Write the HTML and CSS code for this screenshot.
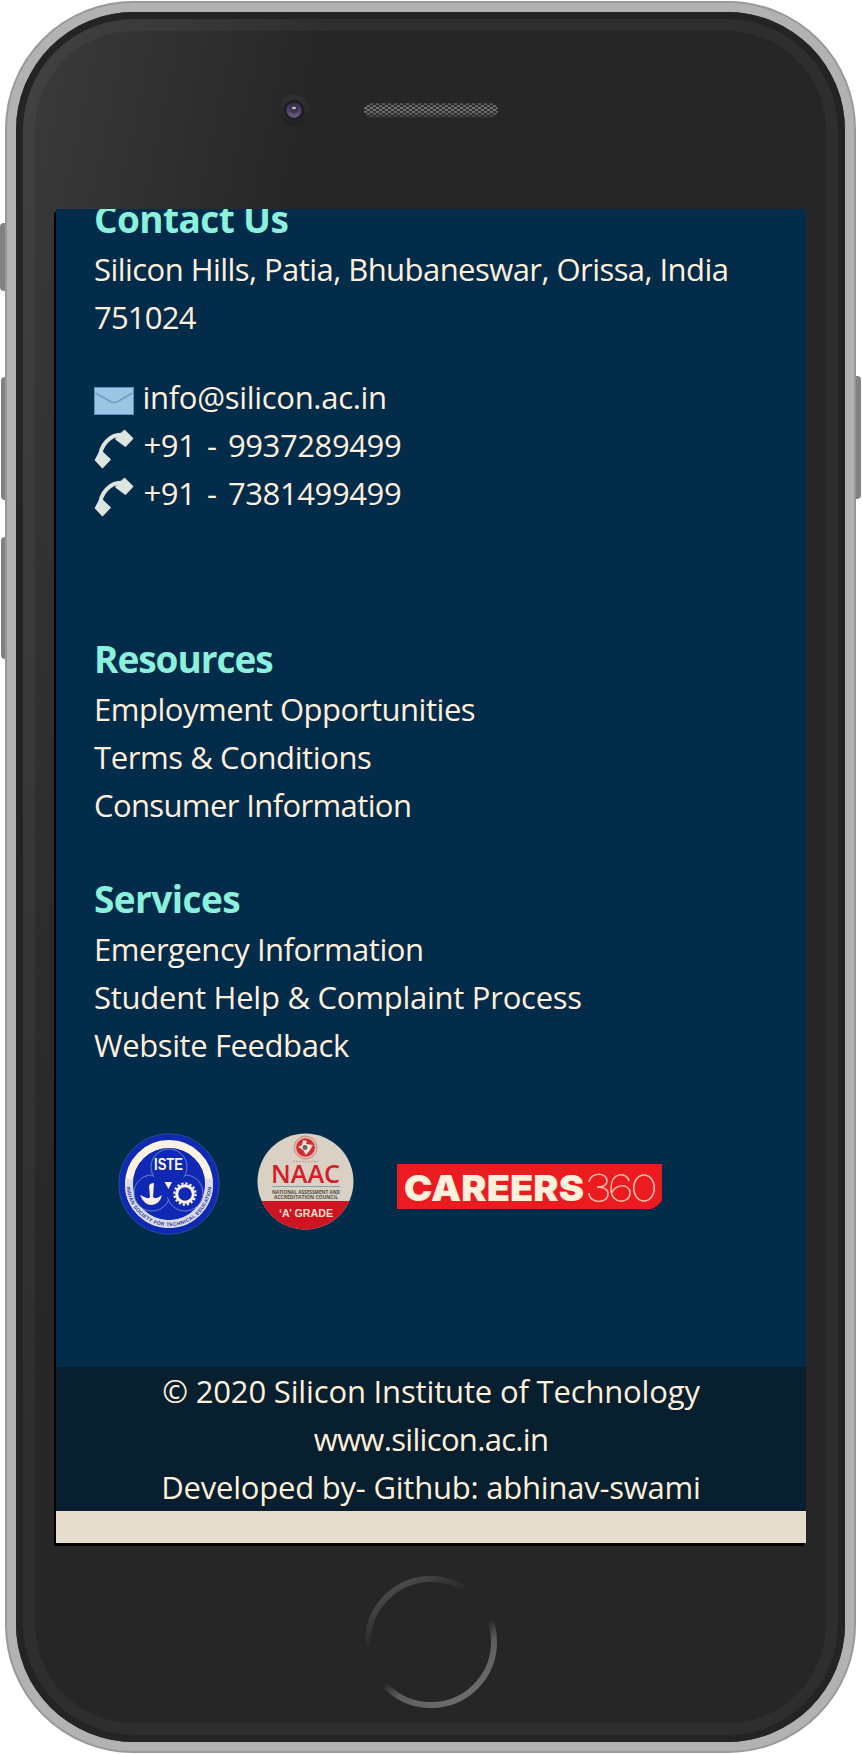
FILE: index.html
```html
<!DOCTYPE html>
<html lang="en">
<head>
<meta charset="utf-8">
<title>Silicon Institute of Technology</title>
<link rel="stylesheet" href="styles.css">
</head>
<body>
<div class="device">
  <i class="key key-mute"></i><i class="key key-up"></i><i class="key key-down"></i><i class="key key-power"></i>
  <div class="shell"><div class="bezel"><div class="ring"></div>
    <div class="top">
      <svg class="camera" width="32" height="32" viewBox="0 0 32 32">
        <defs>
          <linearGradient id="rim" x1="0" y1="0" x2="0" y2="1"><stop offset="0" stop-color="#323232"/><stop offset="1" stop-color="#212121"/></linearGradient>
          <linearGradient id="lens" x1="0" y1="0" x2="0" y2="1"><stop offset="0" stop-color="#35264a"/><stop offset="1" stop-color="#6d5c86"/></linearGradient>
        </defs>
        <circle cx="16" cy="16" r="15.3" fill="url(#rim)"/><circle cx="16" cy="16" r="10" fill="#1c1b20"/>
        <circle cx="16" cy="16" r="7.7" fill="url(#lens)"/><circle cx="16" cy="15.5" r="3.8" fill="#3b3547"/>
        <ellipse cx="16" cy="14" rx="2.2" ry="1.3" fill="#bdb8c4"/>
      </svg>
      <svg class="speaker" width="134" height="15" viewBox="0 0 134 15">
        <defs>
          <pattern id="mesh" width="6" height="4" patternUnits="userSpaceOnUse"><rect width="6" height="4" fill="#303030"/><rect width="3" height="2" fill="#777"/><rect x="3" y="2" width="3" height="2" fill="#777"/></pattern>
          <linearGradient id="shade" x1="0" y1="0" x2="0" y2="1"><stop offset="0" stop-color="#262626" stop-opacity=".55"/><stop offset=".3" stop-color="#262626" stop-opacity="0"/><stop offset=".6" stop-color="#262626" stop-opacity=".1"/><stop offset="1" stop-color="#262626" stop-opacity=".85"/></linearGradient>
        </defs>
        <rect width="134" height="15" rx="7.5" fill="url(#mesh)"/><rect width="134" height="15" rx="7.5" fill="url(#shade)"/>
      </svg>
    </div>
    <main class="screen">
      <section class="contact">
        <h2 class="t-contact">Contact Us</h2>
        <p class="t-address">Silicon Hills, Patia, Bhubaneswar, Orissa, India</p>
        <p class="t-pin">751024</p>
        <div class="reach">
          <p class="line"><svg class="ico" width="40" height="48" viewBox="0 0 40 48"><rect x=".5" y="14.5" width="39" height="27" fill="#9bc5e2" stroke="#5c92bd"/><path d="M1.5 20 L16.5 28.6 Q20 30.4 23.5 28.6 L38.5 20" fill="none" stroke="#689dc6" stroke-width="1.5"/></svg><span class="t-mail">info@silicon.ac.in</span></p>
          <p class="line"><svg class="ico" width="40" height="48" viewBox="0 0 40 48"><use href="#handset"/></svg><span class="t-phone">+91 - 9937289499</span></p>
          <p class="line"><svg class="ico" width="40" height="48" viewBox="0 0 40 48"><g id="handset"><path d="M7 36 C5 26 16 12.500 29 14" fill="none" stroke="#dfe5e0" stroke-width="4"/><path d="M30.500 9.500 L38.500 17.500 L31.500 25 L22 18 Z M6.500 29.500 L16 38.500 L8.500 46.500 L1.500 39 Z" fill="#dfe5e0" stroke="#dfe5e0" stroke-width="1.600" stroke-linejoin="round"/></g></svg><span class="t-phone">+91 - 7381499499</span></p>
        </div>
      </section>
      <section class="resources">
        <h2 class="t-resources">Resources</h2>
        <p class="t-employment">Employment Opportunities</p>
        <p class="t-terms">Terms &amp; Conditions</p>
        <p class="t-consumer">Consumer Information</p>
      </section>
      <section class="services">
        <h2 class="t-services">Services</h2>
        <p class="t-emergency">Emergency Information</p>
        <p class="t-student">Student Help &amp; Complaint Process</p>
        <p class="t-feedback">Website Feedback</p>
      </section>
      <div class="badges">
        <svg class="iste" width="102" height="102" viewBox="0 0 102 102">
          <defs><path id="arc" d="M9.200 43 A42.500 42.500 0 1 0 92.800 43"/></defs>
          <circle cx="51" cy="51" r="50.300" fill="#1029b4" stroke="#25508d"/>
          <circle cx="51" cy="51" r="40" fill="none" stroke="#fcf2e4" stroke-width="8"/>
          <path d="M11.300 46 A40 40 0 1 0 90.700 46" fill="none" stroke="#dcdce8" stroke-width="8"/>
          <circle cx="51" cy="51" r="36" fill="#1029b4"/>
          <g fill="#1029b4" stroke="#6f7fcd" stroke-width="1"><circle cx="34" cy="60" r="18"/><circle cx="67" cy="60" r="18"/><circle cx="51" cy="34" r="18"/></g>
          <path d="M36 42 L66 42 L63 57 L51 65 L38 57Z" fill="#1029b4"/>
          <text x="36" y="37" class="iste-name" textLength="29" lengthAdjust="spacingAndGlyphs">ISTE</text>
          <path d="M46.500 49 H54 L50.500 56Z M22 62 Q31 67 32 64 L31 53 Q32 50 36 50 L35 64 Q38 67 44 62 Q42 71 34 72 Q26 72 22 62Z" fill="#fcf2e4"/>
          <circle cx="67" cy="61" r="8.300" fill="none" stroke="#fcf2e4" stroke-width="3"/><circle cx="67" cy="61" r="10.600" fill="none" stroke="#fcf2e4" stroke-width="2.200" stroke-dasharray="2.200 1.970"/>
          <text class="iste-ring"><textPath href="#arc" startOffset="50%">INDIAN SOCIETY FOR TECHNICAL EDUCATION</textPath></text>
        </svg>
        <svg class="naac" width="97" height="97" viewBox="0 0 97 97">
          <defs><clipPath id="disc"><circle cx="48.500" cy="48.500" r="48"/></clipPath></defs>
          <g clip-path="url(#disc)"><rect width="97" height="97" fill="#d9d2c4"/><rect y="68" width="97" height="29" fill="#cf1421"/></g>
          <circle cx="48.500" cy="14.500" r="11.500" fill="#dcb9b0" stroke="#d57873" stroke-width=".8"/><circle cx="48.500" cy="14.500" r="9.300" fill="#d42b32"/>
          <path d="M46 7 L50 8 L49 11 L56 12 L53 17 L49 22 L46 17 L41 14 L45 12Z" fill="#f1e3d8"/><circle cx="48" cy="14.500" r="2.500" fill="#676965"/>
          <path d="M36 28.500 H61" stroke="#cf9f98" stroke-width="1.500" stroke-dasharray="2 1"/>
          <text x="14" y="50" class="naac-name" textLength="69" lengthAdjust="spacingAndGlyphs">NAAC</text>
          <path d="M15 53.500 H83" stroke="#7da3b8"/>
          <text x="15" y="60.500" class="naac-sub" textLength="68" lengthAdjust="spacingAndGlyphs">NATIONAL ASSESSMENT AND</text>
          <text x="17" y="66.300" class="naac-sub" textLength="64" lengthAdjust="spacingAndGlyphs">ACCREDITATION COUNCIL</text>
          <text x="22" y="83.500" class="naac-grade" textLength="54" lengthAdjust="spacingAndGlyphs">‘A’ GRADE</text>
        </svg>
        <svg class="careers" width="265" height="45" viewBox="0 0 265 45">
          <path d="M0 0 H265 V36 Q262 42 254 45 H0Z" fill="#ec1b20"/>
          <text x="7" y="36.500" class="careers-name" textLength="180" lengthAdjust="spacingAndGlyphs">CAREERS</text>
          <g fill="none" stroke="#ffc1ac" stroke-width="1.500"><path d="M192 18 C193 8 210 8 210 17 C210 22 206 23 200 23 C207 23 211 25 211 30 C211 40 192 40 192 29"/><path d="M232 17 C230 8 214 7 214 25 C214 41 233 40 233 29 C233 19 217 20 215 29"/><ellipse cx="247" cy="24" rx="10.300" ry="13"/></g>
        </svg>
      </div>
      <footer class="foot">
        <p class="t-copy">© 2020 Silicon Institute of Technology</p>
        <p class="t-site">www.silicon.ac.in</p>
        <p class="t-dev">Developed by- Github: abhinav-swami</p>
      </footer>
    </main>
    <svg class="home" width="132" height="132" viewBox="0 0 132 132">
      <defs><linearGradient id="homeg" x1=".2" y1="0" x2=".8" y2="1"><stop offset="0" stop-color="#525252"/><stop offset=".32" stop-color="#262626"/><stop offset=".58" stop-color="#262626"/><stop offset=".7" stop-color="#5c5c5c"/><stop offset="1" stop-color="#707070"/></linearGradient></defs>
      <circle cx="66" cy="66" r="63" fill="none" stroke="url(#homeg)" stroke-width="6"/>
    </svg>
  </div></div>
</div>
</body>
</html>
```
FILE: styles.css
```css
* { box-sizing: border-box; margin: 0; padding: 0; }
body { width: 862px; height: 1754px; overflow: hidden; background: #fff; font-family: "Open Sans", "Noto Sans", sans-serif; }
.device { position: relative; height: 1754px; padding: 1px 6px 1px 5px; }
.key { position: absolute; width: 10px; background: #808085; border-radius: 4px; }
.key-mute { left: 0; top: 223px; height: 68px; }
.key-up { left: 1px; top: 377px; height: 123px; }
.key-down { left: 1px; top: 537px; height: 122px; }
.key-power { left: 851px; top: 376px; height: 123px; }
.shell { position: relative; height: 1752px; padding: 9px; border: 2px solid #999; border-radius: 128px; background: #b2b2b2; }
.bezel { position: relative; height: 1730px; border-radius: 118px; padding: 0 38px 0 40px; background: linear-gradient(102deg, #3c3c3c 0, #262626 310px); overflow: hidden; }
.ring { position: absolute; inset: 7px; border: 12px solid rgba(255,255,255,.04); border-radius: 111px; box-shadow: 0 0 0 12px #242424; }
.top { display: flex; height: 197px; padding: 82px 0 0 222px; }
.speaker { margin: 9px 0 0 54px; }
.screen { position: relative; width: 750px; height: 1334px; overflow: hidden; background: #032b4a; box-shadow: -2px 3px 0 #000; color: #fff0dc; font-size: 31px; line-height: 48px; }
section { padding-left: 38px; }
p { height: 48px; white-space: nowrap; }
h2 { height: 48px; margin-bottom: 2px; font-size: 37px; line-height: 48px; color: #8af1dd; white-space: nowrap; }
.contact { margin-top: -14px; }
.reach { margin-top: 32px; }
.line { display: flex; gap: 8px; }
.ico { flex: none; }
.resources { margin-top: 118px; }
.services { margin-top: 46px; }

/* Tracking per line */
.t-contact { letter-spacing: -.6px; }
.t-address { letter-spacing: -.55px; }
.t-pin { letter-spacing: -.8px; }
.t-mail { letter-spacing: -.3px; margin-left: .5px; }
.t-phone { letter-spacing: -.4px; word-spacing: 3.8px; margin-left: 1.5px; }
.t-resources { letter-spacing: -1.05px; }
.t-employment { letter-spacing: -.47px; }
.t-terms { letter-spacing: -.4px; }
.t-consumer { letter-spacing: -.62px; }
.t-services { letter-spacing: -.57px; }
.t-emergency { letter-spacing: -.48px; }
.t-student { letter-spacing: -.25px; }
.t-feedback { letter-spacing: -.4px; }
.t-copy { letter-spacing: -.16px; }
.t-site { letter-spacing: -.68px; }
.t-dev { letter-spacing: -.22px; }

.badges { display: flex; height: 298px; padding: 64px 0 0 62px; align-items: flex-start; }
.naac { margin-left: 37px; }
.careers { margin: 31px 0 0 43px; }
.iste-name { font: bold 16px "Liberation Sans", sans-serif; fill: #fcf2e4; }
.iste-ring { font: bold 5px "Liberation Sans", sans-serif; letter-spacing: .35px; text-anchor: middle; fill: #23379f; }
.naac-name { font: 600 25px "Open Sans", sans-serif; fill: #d1202a; }
.naac-sub { font: bold 5px "Open Sans", sans-serif; fill: #514e4b; }
.naac-grade { font: bold 11px "Liberation Sans", sans-serif; fill: #f8dfd0; }
.careers-name { font: 900 36px Inter, "Liberation Sans", sans-serif; fill: #fff0dc; }
.foot { height: 144px; background: #071f2f; text-align: center; }
.screen::after { content: ""; display: block; height: 32px; background: #e6dccb; }
.home { display: block; margin: 33px 0 0 309px; }
```
